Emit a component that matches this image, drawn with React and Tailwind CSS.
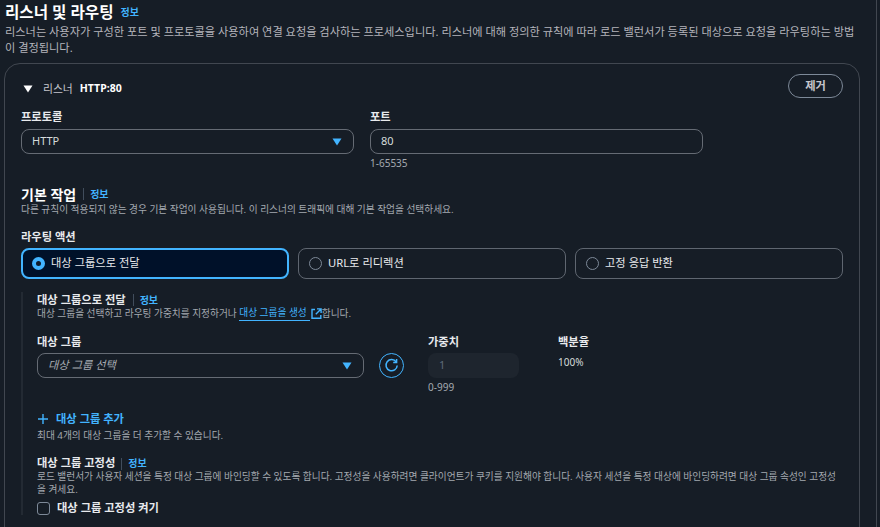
import React from 'react';

const Info = ({ divider = true, className = '' }) => (
  <span className={`flex items-center ${className}`}>
    {divider && <span className="w-px h-3 bg-[#414d5c] mr-[6px]" />}
    <span className="text-[10px] font-bold text-[#42b4ff]">정보</span>
  </span>
);

const Caret = ({ className = '' }) => (
  <svg className={className} width="10" height="8" viewBox="0 0 10 8">
    <path d="M0.5 0.5h9L5 7.5z" fill="currentColor" />
  </svg>
);

const RadioTile = ({ label, selected, className = '' }) => (
  <div
    className={`h-[31px] rounded-lg flex items-center gap-[6px] text-[11.25px] text-[#e8eaed] ${
      selected ? 'border-2 border-[#42b4ff] bg-[#001129] pl-[9px]' : 'border border-[#5f6670] pl-[10px]'
    } ${className}`}
  >
    {selected ? (
      <span className="w-[13px] h-[13px] rounded-full border-[4px] border-[#42b4ff] bg-[#0f1b2a]" />
    ) : (
      <span className="w-[13px] h-[13px] rounded-full border border-[#7d8998]" />
    )}
    {label}
  </div>
);

const App = () => {
  return (
    <div
      className="w-[880px] h-[527px] overflow-hidden bg-[#161d26] text-[#c6c6cd] flex"
      style={{ fontFamily: '"Noto Sans", "Noto Sans CJK KR", sans-serif' }}
    >
      <div className="w-[877px] h-full border-r border-[#414750] shrink-0">
        {/* Header */}
        <div className="pl-[5px] pr-[15px] pt-[1px]">
          <h1 className="flex items-center gap-[7px] h-[22px] text-[15.6px] font-bold text-white leading-[22px]">
            리스너 및 라우팅
            <Info divider={false} />
          </h1>
          <p className="text-[11.2px] leading-[16px] text-[#b4b4bb] mt-[1px] break-all">
            리스너는 사용자가 구성한 포트 및 프로토콜을 사용하여 연결 요청을 검사하는 프로세스입니다. 리스너에 대해 정의한 규칙에 따라 로드 밸런서가 등록된 대상으로 요청을 라우팅하는 방법이 결정됩니다.
          </p>
        </div>

        {/* Listener card */}
        <div className="ml-[4px] mt-[7px] w-[856px] h-[480px] border border-[#414750] rounded-2xl pl-[16px] pr-[16px] pt-[10px]">
          <div className="flex items-center justify-between h-[24px]">
            <div className="flex items-center text-[10.8px] pt-[6px]">
              <Caret className="text-white ml-[2px] mr-[10px]" />
              <span className="text-[#c6c6cd]">리스너</span>
              <span className="ml-[7px] text-[10.5px] font-bold text-white">HTTP:80</span>
            </div>
            <button className="w-[55px] h-[24px] rounded-full border border-[#7d8998] text-[11.25px] font-bold text-[#c6c6cd]">
              제거
            </button>
          </div>

          <div className="flex gap-[16px] mt-[11px]">
            <div className="w-[333px]">
              <label className="block text-[11.25px] leading-[16px] font-bold text-[#e8eaed]">프로토콜</label>
              <div className="mt-[4px] h-[25px] rounded-lg border border-[#656b74] flex items-center justify-between pl-[10px] pr-[11px] text-[11px] text-[#d5dbdb]">
                HTTP
                <Caret className="text-[#42b4ff]" />
              </div>
            </div>
            <div className="w-[333px]">
              <label className="block text-[11.25px] leading-[16px] font-bold text-[#e8eaed]">포트</label>
              <div className="mt-[4px] h-[25px] rounded-lg border border-[#656b74] flex items-center pl-[10px] text-[11px] text-[#d5dbdb]">
                80
              </div>
              <p className="text-[10px] leading-[14px] mt-[2px] text-[#a4a9b0]">1-65535</p>
            </div>
          </div>

          {/* Default action */}
          <h2 className="flex items-center gap-[7px] mt-[14px] h-[20px] text-[14px] font-bold text-white">
            기본 작업
            <Info />
          </h2>
          <p className="text-[9.7px] leading-[14px] mt-[-1px] text-[#a4a9b0]">
            다른 규칙이 적용되지 않는 경우 기본 작업이 사용됩니다. 이 리스너의 트래픽에 대해 기본 작업을 선택하세요.
          </p>

          <label className="block mt-[12px] text-[11.25px] leading-[16px] font-bold text-[#e8eaed]">라우팅 액션</label>
          <div className="flex gap-[9px] mt-[3px]">
            <RadioTile selected label="대상 그룹으로 전달" className="w-[268px]" />
            <RadioTile label="URL로 리디렉션" className="w-[268px]" />
            <RadioTile label="고정 응답 반환" className="w-[268px]" />
          </div>

          {/* Forward to target group */}
          <div className="mt-[13px] border-l-[2px] border-[#232a33] h-[223px] pl-[14px]">
            <h3 className="flex items-center gap-[7px] h-[15px] pt-[1px] text-[11.25px] font-bold text-[#e8eaed]">
              대상 그룹으로 전달
              <Info />
            </h3>
            <p className="flex items-center text-[9.7px] leading-[14px] mt-[-1px] text-[#a4a9b0]">
              대상 그룹을 선택하고 라우팅 가중치를 지정하거나&nbsp;
              <span className="text-[#42b4ff] border-b border-[#42b4ff] pr-[3px]">대상 그룹을 생성</span>
              <svg className="text-[#42b4ff] ml-[1px]" width="11" height="11" viewBox="0 0 11 11" fill="none" stroke="currentColor" strokeWidth="1.4">
                <path d="M4 1.5H1v8.8h8.8V7M6 .9h4.1V5M10 1 4.8 6.2" />
              </svg>
              합니다.
            </p>

            <div className="flex mt-[13px]">
              <div className="w-[327px]">
                <label className="block text-[11.25px] leading-[16px] font-bold text-[#e8eaed]">대상 그룹</label>
                <div className="mt-[3px] h-[25px] rounded-lg border border-[#656b74] flex items-center justify-between pl-[10px] pr-[11px] text-[11.25px] italic text-[#a4a9b0]">
                  대상 그룹 선택
                  <Caret className="text-[#42b4ff]" />
                </div>
              </div>
              <button className="ml-[15px] mt-[19px] w-[25px] h-[25px] rounded-full border border-[#42b4ff] flex items-center justify-center text-[#42b4ff]">
                <svg width="15" height="15" viewBox="0 0 15 15" fill="none" stroke="currentColor" strokeWidth="1.5">
                  <path d="M12.2 4A5.6 5.6 0 1 0 13.2 7.5" />
                  <path d="M12.6 1v3.4H9.2" />
                </svg>
              </button>
              <div className="ml-[24px] w-[91px]">
                <label className="block text-[11.25px] leading-[16px] font-bold text-[#e8eaed]">가중치</label>
                <div className="mt-[3px] h-[25px] rounded-lg bg-[#1e252e] flex items-center pl-[11px] text-[11px] text-[#5f6b7a]">1</div>
                <p className="text-[10px] leading-[14px] mt-[2px] text-[#a4a9b0]">0-999</p>
              </div>
              <div className="ml-[39px]">
                <label className="block text-[11.25px] leading-[16px] font-bold text-[#e8eaed]">백분율</label>
                <p className="text-[10px] leading-[14px] mt-[5px] text-[#d5dbdb]">100%</p>
              </div>
            </div>

            <button className="flex items-center mt-[15px] h-[20px] text-[11.25px] font-bold text-[#42b4ff]">
              <svg className="mr-[8px] ml-[1px]" width="10" height="10" viewBox="0 0 10 10" stroke="currentColor" strokeWidth="1.4">
                <path d="M5 0v10M0 5h10" />
              </svg>
              대상 그룹 추가
            </button>
            <p className="text-[9.7px] leading-[14px] text-[#a4a9b0]">최대 4개의 대상 그룹을 더 추가할 수 있습니다.</p>

            <h3 className="flex items-center gap-[6px] h-[15px] mt-[13px] text-[11.25px] font-bold text-[#e8eaed]">
              대상 그룹 고정성
              <Info />
            </h3>
            <p className="text-[9.7px] leading-[13px] mt-[-1px] text-[#a4a9b0] w-[800px] break-all">
              로드 밸런서가 사용자 세션을 특정 대상 그룹에 바인딩할 수 있도록 합니다. 고정성을 사용하려면 클라이언트가 쿠키를 지원해야 합니다. 사용자 세션을 특정 대상에 바인딩하려면 대상 그룹 속성인 고정성을 켜세요.
            </p>
            <label className="flex items-center gap-[7px] mt-[4px] text-[11.25px] font-bold text-[#e8eaed]">
              <span className="w-[13px] h-[13px] rounded-[3px] border border-[#7d8998]" />
              대상 그룹 고정성 켜기
            </label>
          </div>
        </div>
      </div>
    </div>
  );
};

export default App;
